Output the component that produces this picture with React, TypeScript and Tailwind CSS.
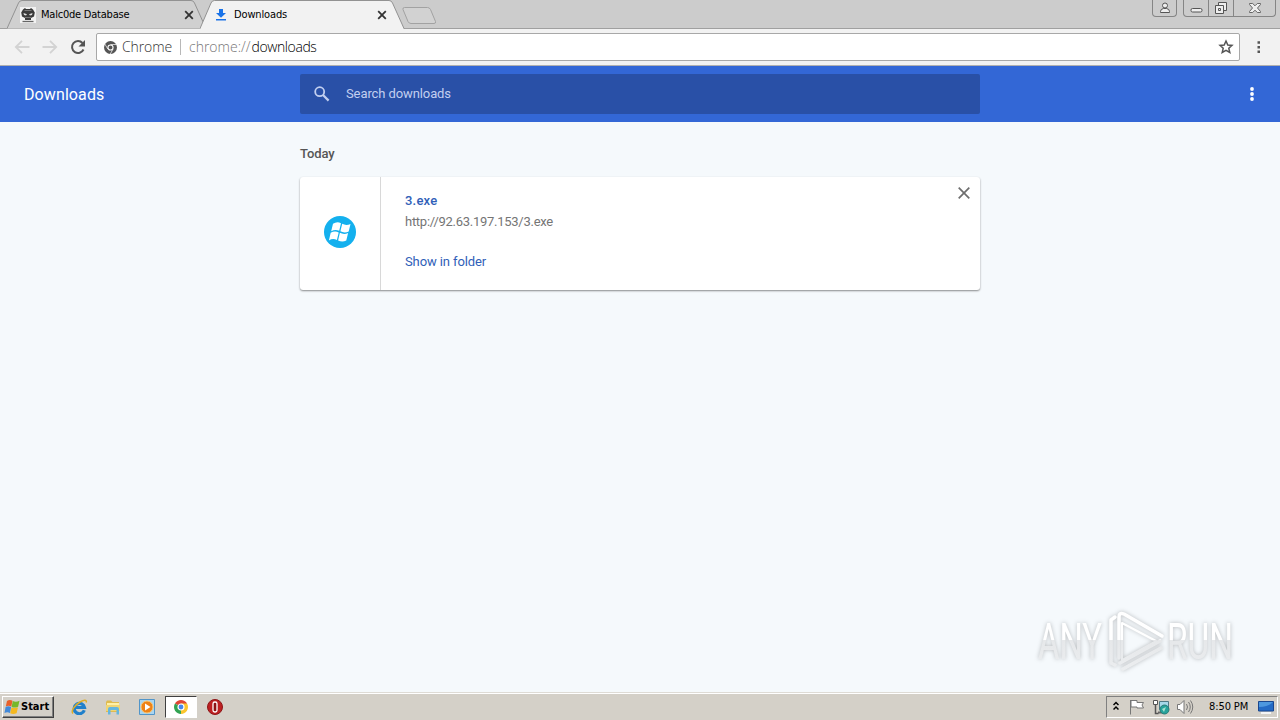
import type { ReactNode } from "react";

interface TextProps {
 children: ReactNode;
}

interface TabShapeProps {
 d: string;
 fill: string;
}

function TabShape({ d, fill }: TabShapeProps) {
 return (
  <svg
   className="absolute inset-0"
   width="206"
   height="29"
   viewBox="0 0 206 29"
   fill="none">
   <path d={d} fill={fill} stroke="#929292" />
  </svg>
 );
}

function CloseGlyph() {
 return (
  <svg width="10" height="10" viewBox="0 0 10 10" className="shrink-0">
   <path d="M1.200 1.200 8.800 8.800M8.800 1.200 1.200 8.800" stroke="#333" strokeWidth="1.800" />
  </svg>
 );
}

function MalcodeIcon() {
 return (
  <svg width="16" height="16" viewBox="0 0 16 16">
   <path d="M0 0h16v16H0z" fill="#f2f2f2" />
   <path d="M3 2.500 5 1l1 1h4l1-1 2 1.500 1.800 3L14 9.500 11 11v2H5v-2L2 9.500 1.200 5.500z" fill="#3a3a3a" />
   <path d="M3.500 6 7 7.200 6 8.500 4 8zM12.500 6 9 7.200l1 1.300 2-.500z" fill="#ddd" />
   <path d="M4.500 3.500h7M5 10.500h6" stroke="#888" strokeWidth=".800" />
   <path d="M2.500 14.500h11" stroke="#666" strokeWidth="1.300" />
  </svg>
 );
}

function DownloadIcon() {
 return (
  <svg width="12" height="12" viewBox="0 0 12 12" fill="#1a73e8">
   <path d="M4 0h4v4h3L6 8.800 1 4h3zM1 10h10v1.500H1z" />
  </svg>
 );
}

function Tabs() {
 return (
  <div className="flex h-[29px] border-b border-[#a0a0a0] bg-[#cccccc]">
   <div className="relative ml-[7px] h-[29px] w-[193px] shrink-0">
    <TabShape
     d="M0 28.500 11.500 3Q12.500 .500 15 .500H184Q186.500 .500 187.500 3L199 28.500"
     fill="#d0d0d0"
    />
    <div className="relative flex h-[29px] items-center pl-[13px]">
     <MalcodeIcon />
     <UiText>
      <span className="ml-[5px] w-[143px] tracking-[-0.22px]">Malc0de Database</span>
     </UiText>
     <CloseGlyph />
    </div>
   </div>
   <div className="relative h-[29px] w-[202px] shrink-0">
    <TabShape
     d="M0 28.500 11 3Q12 .500 14.500 .500H189Q191.500 .500 192.500 3L204 28.500V30H0z"
     fill="#f2f2f2"
    />
    <div className="relative flex h-[29px] items-center pl-[15px]">
     <DownloadIcon />
     <UiText>
      <span className="ml-[7px] w-[143px] tracking-[-0.14px]">Downloads</span>
     </UiText>
     <CloseGlyph />
    </div>
   </div>
   <svg width="36" height="20" viewBox="0 0 36 20" className="mt-[6px] shrink-0">
    <path
     d="M2.500 1.500h23q2 0 3 2l5 12q.500 2-1.500 2h-23q-2 0-3-2l-5-12q-.500-2 1.500-2z"
     fill="#d2d2d2"
     stroke="#a2a2a2"
    />
   </svg>
   <WindowButtons />
  </div>
 );
}

function UiText({ children }: TextProps) {
 return (
  <span className="flex font-['DejaVu_Sans_Condensed','DejaVu_Sans',sans-serif] text-[11px] leading-4 [font-stretch:condensed] text-black">
   {children}
  </span>
 );
}

function WindowButtons() {
 return (
  <div className="ml-auto flex h-[17px] shrink-0 pr-[4px]">
   <div className="mr-[6px] flex w-[25px] justify-center rounded-b-[4px] border border-t-0 border-[#858585]">
    <svg width="12" height="16" viewBox="0 0 12 16" fill="#eee" stroke="#555">
     <circle cx="6" cy="5.500" r="2.500" />
     <path d="M1.500 12.500v-1q0-2.500 3-3h3q3 .500 3 3v1z" />
    </svg>
   </div>
   <div className="flex rounded-b-[4px] border border-t-0 border-[#858585]">
    <div className="flex w-[25px] justify-center border-r border-[#858585]">
     <svg width="13" height="16" viewBox="0 0 13 16">
      <rect x="1" y="8.500" width="11" height="3.500" rx="1.500" fill="#eee" stroke="#555" />
     </svg>
    </div>
    <div className="flex w-[25px] justify-center border-r border-[#858585]">
     <svg width="14" height="16" viewBox="0 0 14 16" fill="#eee" stroke="#555">
      <path d="M4.500 2.500h8v8h-8z" />
      <path d="M1.500 5.500h8v8h-8z" />
      <path d="M4.500 8.500h2v2h-2z" />
     </svg>
    </div>
    <div className="flex w-[41px] justify-center">
     <svg width="14" height="16" viewBox="0 0 14 16">
      <path
       d="M1.500 3.500h3.200L7 5.800l2.300-2.300h3.200v1L9.500 8l3 3.500v1H9.300L7 10.200l-2.300 2.300H1.500v-1l3-3.500-3-3.500z"
       fill="#eee"
       stroke="#666"
      />
     </svg>
    </div>
   </div>
  </div>
 );
}

function Toolbar() {
 return (
  <div className="flex h-[37px] items-center border-b border-[#b0b0b0] bg-[#f2f2f2] pl-[14px]">
   <svg width="16" height="14" viewBox="0 0 16 14" fill="none" stroke="#d3d3d3" strokeWidth="1.800">
    <path d="M15.500 7H2M8 .800 1.800 7 8 13.200" />
   </svg>
   <svg width="16" height="14" viewBox="0 0 16 14" fill="none" stroke="#d3d3d3" strokeWidth="1.800" className="ml-[12px]">
    <path d="M.500 7H14M8 .800 14.200 7 8 13.200" />
   </svg>
   <svg width="16" height="16" viewBox="0 0 16 16" className="ml-[12px]" fill="none">
    <path d="M13.500 10.500A6 6 0 1 1 12.500 4" stroke="#555" strokeWidth="2" />
    <path d="M15 1v6.500H8.500z" fill="#555" />
   </svg>
   <div className="ml-[10px] flex h-[28px] w-[1144px] items-center rounded-[2px] border border-[#a8a8a8] bg-white pl-[7px] font-['Open_Sans','Noto_Sans',sans-serif] text-sm font-light">
    <svg width="13" height="13" viewBox="0 0 24 24" className="shrink-0">
     <circle cx="12" cy="12" r="12" fill="#555" />
     <path d="M12 6.500h11M7 14.700 1.500 5.500M16.800 14.700 11.500 24" stroke="#fff" strokeWidth="1.300" />
     <circle cx="12" cy="12" r="4.700" fill="#555" stroke="#fff" strokeWidth="2" />
    </svg>
    <span className="ml-[5px] w-[50px] tracking-[-0.1px] text-[#333]">Chrome</span>
    <span className="ml-[8px] h-4 w-px bg-[#b8b8b8]" />
    <span className="ml-[8px] text-[#777]">
     chrome://<span className="ml-[1px] tracking-[-0.4px] text-black">downloads</span>
    </span>
    <svg width="16" height="16" viewBox="0 0 16 16" className="mr-[5px] ml-auto" fill="none" stroke="#555" strokeWidth="1.500">
     <path d="m8 2 1.800 4 4.200.400-3.200 2.900 1 4.200L8 11.300l-3.800 2.200 1-4.200L2 6.400 6.200 6z" />
    </svg>
   </div>
   <svg width="4" height="14" viewBox="0 0 4 14" fill="#555" className="ml-[17px]">
    <path d="M.500 1.200h2.500v2.500H.500zM.500 5.900h2.500v2.500H.500zM.500 10.600h2.500v2.500H.500z" />
   </svg>
  </div>
 );
}

function DownloadsHeader() {
 return (
  <header className="flex h-14 items-center bg-[#3367d6] pl-6">
   <h1 className="w-[276px] pt-[2px] text-base tracking-[0.1px] text-white">Downloads</h1>
   <div className="flex h-10 w-[680px] items-center rounded-[2px] bg-[#2950a7] pl-[14px]">
    <svg width="16" height="16" viewBox="0 0 16 16" fill="none" stroke="#c2cff0" strokeWidth="1.800">
     <circle cx="5.700" cy="5.700" r="4.500" />
     <path d="m9 9 5.600 5.600" strokeWidth="2.200" />
    </svg>
    <span className="ml-4 text-[13px] tracking-[-0.1px] text-[#c2cff0]">Search downloads</span>
   </div>
   <svg width="4" height="14" viewBox="0 0 4 14" fill="#fff" className="ml-[270px]">
    <circle cx="2" cy="2" r="1.900" />
    <circle cx="2" cy="7" r="1.900" />
    <circle cx="2" cy="12" r="1.900" />
   </svg>
  </header>
 );
}

function DownloadCard() {
 return (
  <div className="flex h-[113px] w-[680px] rounded-[3px] bg-white text-[13px] shadow-[0_1px_2px_rgba(0,0,0,0.45)]">
   <div className="flex w-[81px] items-center justify-center border-r border-[#d8d8d8]">
    <svg width="32" height="32" viewBox="0 0 32 32" className="mb-[3px]">
     <circle cx="16" cy="16" r="16" fill="#14b0ee" />
     <path
      d="M9 7.800q4-2.800 8-.600l-1.800 7.600q-4-2-8 .500zM18.200 7.800q4 2.200 8.300.100l-1.800 7.600q-4.300 2-8.300-.200zM6.700 16.800q4-2.500 8-.400l-1.800 7.600q-4-2-8 .400zM15.900 16.800q4 2.200 8.200.200l-1.800 7.600q-4.200 2-8.200-.200z"
      fill="#fff"
     />
    </svg>
   </div>
   <div className="flex grow flex-col pt-[14px] pl-6 leading-5">
    <span className="font-medium tracking-[0.2px] text-[#3060b8]">3.exe</span>
    <span className="mt-[1px] tracking-[-0.27px] text-[#757575]">http://92.63.197.153/3.exe</span>
    <span className="mt-5 tracking-[-0.1px] text-[#3060b8]">Show in folder</span>
   </div>
   <svg width="12" height="12" viewBox="0 0 12 12" stroke="#6e6e6e" strokeWidth="1.700" className="mt-[10px] mr-[10px]">
    <path d="m.700.700 10.600 10.600M11.300.700.700 11.300" />
   </svg>
  </div>
 );
}

function Watermark() {
 return (
  <svg
   className="absolute right-[30px] bottom-[8px] overflow-visible drop-shadow-[0_0_2px_rgba(0,0,0,0.25)]"
   width="220"
   height="84"
   viewBox="1030 600 220 84">
   <defs>
    <linearGradient id="shine" gradientUnits="userSpaceOnUse" x1="0" y1="610" x2="0" y2="672">
     <stop offset="0" stopColor="#fff" />
     <stop offset=".480" stopColor="#fff" />
     <stop offset=".490" stopColor="#e6e8ea" />
     <stop offset="1" stopColor="#eceef0" />
    </linearGradient>
   </defs>
   <g fill="url(#shine)" fontFamily="Roboto, sans-serif" fontSize="50" fontWeight="400">
    <text x="1038" y="659" textLength="64" lengthAdjust="spacingAndGlyphs">ANY</text>
    <text x="1167" y="659" textLength="66" lengthAdjust="spacingAndGlyphs">RUN</text>
   </g>
   <g fill="none" stroke="url(#shine)" strokeWidth="3.500" strokeLinejoin="round" strokeLinecap="round">
    <path d="M1115 617l-4 3v43l4 2" />
    <path d="M1119 658v-41q0-5 5-3l38 22" />
    <path d="M1122 623l34 18-34 19z" strokeWidth="2" />
    <path d="M1120 663l40-22M1123 669l38-21" />
   </g>
  </svg>
 );
}

function DownloadsPage() {
 return (
  <main className="relative flex h-[570px] flex-col items-center bg-[#f5f9fc]">
   <div className="w-[680px] pt-[22px]">
    <h2 className="mb-[13px] text-[13px] leading-5 font-medium tracking-[-0.1px] text-[#555]">Today</h2>
    <DownloadCard />
   </div>
   <Watermark />
  </main>
 );
}

function WindowsFlag() {
 return (
  <svg width="16" height="16" viewBox="0 0 16 16">
   <path d="M3 2q2.500-2 5.500-.300L7.300 7.600q-2.700-1.600-5.500-.100z" fill="#e8602a" />
   <path d="M8.800 2q3 1.700 6.700-.300l-1.400 6q-3.400 1.700-6.500.200z" fill="#76b82a" />
   <path d="M1.600 8q2.700-1.500 5.500 0L6 14q-2.800-1.600-5.500 0z" fill="#4289d9" />
   <path d="M7.500 8.500q3 1.300 6.500-.300l-1.400 6q-3.300 1.600-6.400.100z" fill="#f5b920" />
  </svg>
 );
}

function ExplorerE() {
 return (
  <svg width="17" height="16" viewBox="0 0 17 16" fill="none">
   <path d="M13.300 11.300A5.200 5.200 0 1 1 13.500 8.500H4" stroke="#2080cb" strokeWidth="3.200" />
   <path d="M2 14.500C-.500 12 4 6 9 3c4-2.500 7-2.500 6.200.500" stroke="#dfad28" strokeWidth="1.500" />
  </svg>
 );
}

function FolderIcon() {
 return (
  <svg width="16" height="16" viewBox="0 0 16 16">
   <path d="M1 3l1-1.500h4L7.500 3H14v10H1z" fill="#dfbb50" />
   <path d="M2 4h12v4H2z" fill="#fff0a5" />
   <path d="M1 6h14v6H1z" fill="#f0d574" />
   <path d="M3 15.500V10q0-2 2-2h7q2 0 2 2v5.500h-2.500v-4.500h-6v4.500z" fill="#64b6df" />
  </svg>
 );
}

function MediaIcon() {
 return (
  <svg width="16" height="16" viewBox="0 0 16 16">
   <path d="M.500.500h15v15H.500z" fill="#a9d5f1" stroke="#5195c9" />
   <circle cx="8" cy="8" r="6" fill="#ee8217" stroke="#ffc56b" />
   <path d="M6 4.500v7L11.500 8z" fill="#fff" />
  </svg>
 );
}

function ChromeIcon() {
 return (
  <svg width="14" height="14" viewBox="0 0 14 14">
   <path d="M7 7 .940 3.500A7 7 0 0 1 13.060 3.500z" fill="#df4635" />
   <path d="M7 7V3.500h6.060A7 7 0 0 1 7 14z" fill="#fbc52d" />
   <path d="M7 7v7A7 7 0 0 1 .940 3.500z" fill="#31a352" />
   <circle cx="7" cy="7" r="3" fill="#4587ed" stroke="#fff" strokeWidth="1.200" />
  </svg>
 );
}

function StopIcon() {
 return (
  <svg width="16" height="16" viewBox="0 0 16 16">
   <circle cx="8" cy="8" r="7.500" fill="#bd2022" stroke="#8d1517" />
   <rect x="6" y="3" width="4" height="10" rx="1.800" fill="#8d1214" stroke="#fff" strokeWidth="1.300" />
  </svg>
 );
}

function Tray() {
 return (
  <div className="ml-auto flex h-[22px] w-[172px] items-center border border-t-[#808080] border-r-white border-b-white border-l-[#808080] pl-[6px]">
   <svg width="6" height="10" viewBox="0 0 6 10" fill="none" stroke="#000" strokeWidth="1.500" className="mb-[3px]">
    <path d="M.500 4 3 1.500 5.500 4M.500 8.500 3 6l2.500 2.500" />
   </svg>
   <svg width="16" height="16" viewBox="0 0 16 16" className="ml-[10px]" fill="#fff" stroke="#777">
    <path d="M1.500 1v14.500M2 1.500h6v2h6.500L13 6l1.500 3H8V8H2z" />
   </svg>
   <svg width="17" height="16" viewBox="0 0 17 16" className="ml-[8px]" fill="none">
    <path d="M6.500 2.500h9v8h-9z" fill="#a6d7e8" stroke="#507985" />
    <path d="M5 13.500h8" stroke="#666" strokeWidth="2" />
    <path d="M.500 1.500h4v4h-4z" fill="#fff" stroke="#555" />
    <path d="M2.500 5.500v9h3" stroke="#555" strokeWidth="1.500" />
    <circle cx="11.500" cy="10.500" r="4.500" fill="#26a29b" stroke="#287b76" />
    <path d="m9 10 4-2-2 5z" fill="#a7e1cf" />
   </svg>
   <svg width="17" height="16" viewBox="0 0 17 16" className="ml-[7px]" fill="none" stroke="#777">
    <path d="M.500 5.500H3l4-4v13l-4-4H.500z" fill="#fff" />
    <path d="M9.500 5q2 3 0 6M11.500 3q3.500 5 0 10M13.500 1.500q4.500 6.500 0 13" />
   </svg>
   <UiText>
    <span className="ml-[15px] w-[49px] tracking-[-0.1px]">8:50 PM</span>
   </UiText>
   <svg width="16" height="13" viewBox="0 0 16 13">
    <path d="M.500.500h15v9.500H.500z" fill="#246bc5" stroke="#1a478e" />
    <path d="M1 1h14Q10 6 1 6z" fill="#4d98df" />
    <path d="M3 12h10" stroke="#f5f5f5" strokeWidth="2" />
   </svg>
  </div>
 );
}

function Taskbar() {
 return (
  <footer className="flex h-7 items-center border-t border-[#dedbd5] bg-[#d4d0c8] pt-px pr-[2px] pl-[2px] shadow-[inset_0_1px_0_#fff]">
   <div className="flex h-[22px] w-[52px] items-center gap-[1px] border border-t-white border-r-[#404040] border-b-[#404040] border-l-white pl-px shadow-[inset_-1px_-1px_0_#808080]">
    <WindowsFlag />
    <span className="font-['DejaVu_Sans_Condensed','DejaVu_Sans',sans-serif] text-[11px] font-bold tracking-[0px] text-black">Start</span>
   </div>
   <div className="ml-[17px] flex items-center">
    <ExplorerE />
    <div className="ml-[17px]"><FolderIcon /></div>
    <div className="ml-[18px]"><MediaIcon /></div>
    <div className="ml-[10px] flex h-[22px] w-[32px] items-center justify-center border border-t-[#404040] border-r-white border-b-white border-l-[#404040] bg-white">
     <ChromeIcon />
    </div>
    <div className="ml-[10px]"><StopIcon /></div>
   </div>
   <Tray />
  </footer>
 );
}

export default function App() {
 return (
  <div className="h-[720px] w-[1280px] overflow-hidden bg-[#f5f9fc] font-['Roboto',sans-serif]">
   <Tabs />
   <Toolbar />
   <DownloadsHeader />
   <DownloadsPage />
   <Taskbar />
  </div>
 );
}
